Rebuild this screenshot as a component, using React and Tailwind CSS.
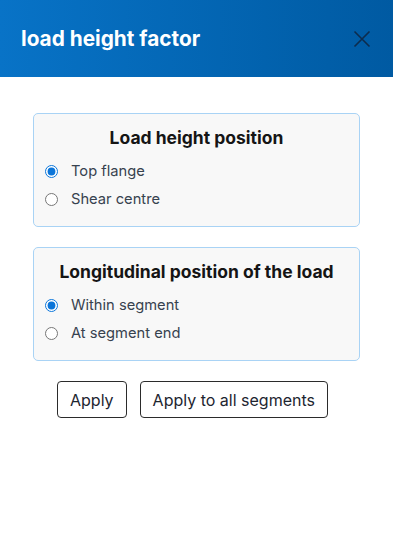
import React, { useState } from 'react';

const font = { fontFamily: 'Inter, "Noto Sans", sans-serif' };

const RadioGroup = ({ title, name, options, value, onChange }) => (
  <div className="rounded-[5px] border border-[#a9d3f5] bg-[#f8f8f8] px-[10px] pt-3 pb-[13px]">
    <h2 className="text-center text-[17.5px] font-bold leading-6 text-[#151515]">{title}</h2>
    <div className="mt-[7px] flex flex-col">
      {options.map((opt) => (
        <label key={opt} className="flex h-7 items-center gap-[13px] pl-[1px] text-[14.7px] text-[#37424f]">
          <input
            type="radio"
            name={name}
            checked={value === opt}
            onChange={() => onChange(opt)}
            className="m-0 h-[13px] w-[13px] accent-[#0b75d9]"
          />
          {opt}
        </label>
      ))}
    </div>
  </div>
);

const App = () => {
  const [height, setHeight] = useState('Top flange');
  const [position, setPosition] = useState('Within segment');

  return (
    <div className="min-h-[552px] bg-white" style={font}>
      <div className="flex h-[77px] items-center justify-between bg-gradient-to-r from-[#0873c7] to-[#005aa2] pl-[21px] pr-[21px]">
        <h1 className="text-[20.8px] font-bold text-white">load height factor</h1>
        <button className="text-[#0d2c4d]" aria-label="Close">
          <svg width="20" height="20" viewBox="0 0 20 20" fill="none" stroke="currentColor" strokeWidth="1.6">
            <path d="M2.5 2.5l15 15M17.5 2.5l-15 15" />
          </svg>
        </button>
      </div>

      <div className="flex flex-col gap-5 px-[33px] pt-9">
        <RadioGroup
          title="Load height position"
          name="height"
          options={['Top flange', 'Shear centre']}
          value={height}
          onChange={setHeight}
        />
        <RadioGroup
          title="Longitudinal position of the load"
          name="position"
          options={['Within segment', 'At segment end']}
          value={position}
          onChange={setPosition}
        />
      </div>

      <div className="mt-5 flex justify-center gap-[13px] pr-[8px]">
        <button className="h-[37px] rounded-[4px] border border-[#2b2b2b] px-[12px] text-[16px] text-[#1d2530]">
          Apply
        </button>
        <button className="h-[37px] rounded-[4px] border border-[#2b2b2b] px-[12px] text-[16px] text-[#1d2530]">
          Apply to all segments
        </button>
      </div>
    </div>
  );
};

export default App;
